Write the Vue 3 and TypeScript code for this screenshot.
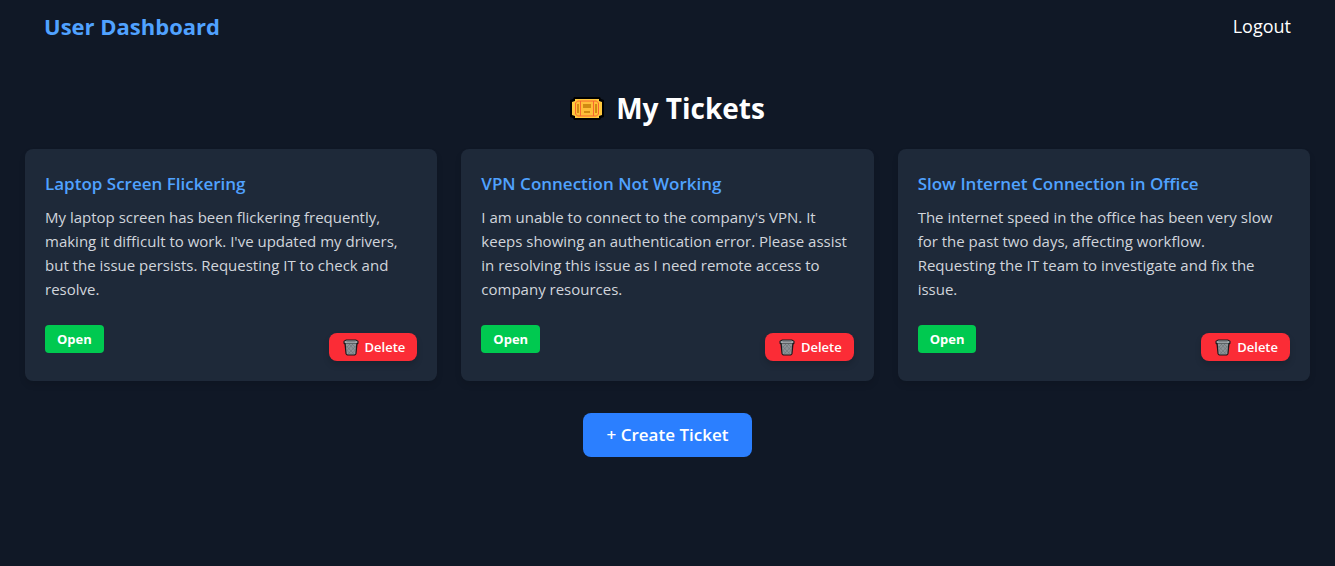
<script setup lang="ts">
interface Ticket {
  id: number
  title: string
  description: string
  status: string
}

const tickets: Ticket[] = [
  {
    id: 1,
    title: 'Laptop Screen Flickering',
    description:
      "My laptop screen has been flickering frequently, making it difficult to work. I've updated my drivers, but the issue persists. Requesting IT to check and resolve.",
    status: 'Open',
  },
  {
    id: 2,
    title: 'VPN Connection Not Working',
    description:
      "I am unable to connect to the company's VPN. It keeps showing an authentication error. Please assist in resolving this issue as I need remote access to company resources.",
    status: 'Open',
  },
  {
    id: 3,
    title: 'Slow Internet Connection in Office',
    description:
      'The internet speed in the office has been very slow for the past two days, affecting workflow. Requesting the IT team to investigate and fix the issue.',
    status: 'Open',
  },
]
</script>

<template>
  <div class="page">
    <header class="navbar">
      <h1 class="brand">User Dashboard</h1>
      <button type="button" class="logout">Logout</button>
    </header>

    <main class="content">
      <h2 class="heading">
        <svg class="ticket-icon" viewBox="0 0 34 23" aria-hidden="true">
          <path d="M4 0H30L31 2L34 3V20L31 21L30 23H4L3 21L0 20V3L3 2Z" fill="#000" />
          <path d="M5 2H29V4L32 5V18L29 19V21H5V19L2 18V5L5 4Z" fill="#ffc83d" />
          <path d="M7.500 4H26.500L28.500 6V17L26.500 19H7.500L5.500 17V6Z" fill="#ffbd38" stroke="#f8672f" />
          <path d="M10.500 4V19M23.500 4V19" stroke="#f8672f" />
          <path d="M13 7H21V11H13ZM14 14H20V16H14ZM7 7H9V16H7ZM25 7H27V16H25Z" fill="#d18a12" />
        </svg>
        <span>My Tickets</span>
      </h2>

      <section class="grid">
        <article v-for="ticket in tickets" :key="ticket.id" class="card">
          <h3 class="title">{{ ticket.title }}</h3>
          <p class="description">{{ ticket.description }}</p>
          <div class="footer">
            <span class="status">{{ ticket.status }}</span>
            <button type="button" class="delete">
              <svg class="trash-icon" viewBox="0 0 16 17" aria-hidden="true">
                <path d="M3 0.500H13L15.500 2V4.500L14.500 5.500L13.500 15L12 16.500H4L2.500 15L1.500 5.500L0.500 4.500V2Z" fill="#17191b" />
                <path d="M2.800 5H13.200L12.400 14.500L11.500 15.500H4.500L3.600 14.500Z" fill="#8d9498" />
                <path d="M3.300 7L11 15M6 5L12 11.500M9 5L12.500 8.500M3.700 11L7.500 15M12.700 7L5 15M10 5L4 11.500M7 5L3.500 8.500M12.300 11L8.500 15" stroke="#6a7175" stroke-width="0.600" />
                <path d="M3.500 1.500H12.500L14.500 2.500V3.500L13 4.500H3L1.500 3.500V2.500Z" fill="#a4abaf" />
                <path d="M4 2.300H12L13 2.800L12 3.300H4L3 2.800Z" fill="#70777b" />
              </svg>
              <span>Delete</span>
            </button>
          </div>
        </article>
      </section>

      <button type="button" class="create">+ Create Ticket</button>
    </main>
  </div>
</template>

<style>
body {
  margin: 0;
  background: #101826;
}
</style>

<style scoped>
.page {
  min-height: 100vh;
  box-sizing: border-box;
  background: #101826;
  color: #fff;
  font-family: 'Segoe UI', 'Open Sans', 'Noto Sans', sans-serif;
}

h1,
h2,
h3,
p {
  margin: 0;
}

button {
  border: 0;
  color: #fff;
  font-family: inherit;
  cursor: pointer;
}

.navbar {
  display: flex;
  justify-content: space-between;
  align-items: center;
  padding: 10px 44px;
}

.brand {
  color: #50a2ff;
  font-size: 22px;
  line-height: 32px;
  font-weight: 700;
}

.logout {
  padding: 0;
  background: transparent;
  font-size: 18px;
  line-height: 28px;
}

.content {
  display: flex;
  flex-direction: column;
  align-items: center;
  padding: 38px 25px 24px;
}

.heading {
  display: flex;
  align-items: center;
  gap: 12px;
  margin-bottom: 23px;
  font-size: 28px;
  line-height: 36px;
  font-weight: 700;
}

.ticket-icon {
  width: 34px;
  height: 23px;
}

.grid {
  display: grid;
  grid-template-columns: repeat(3, minmax(0, 1fr));
  gap: 24px;
  width: 100%;
}

.card {
  padding: 20px;
  border-radius: 8px;
  background: #1e2939;
  box-shadow: 0 4px 6px rgba(0, 0, 0, 0.1);
}

.title {
  margin-bottom: 6px;
  color: #50a2ff;
  font-size: 17px;
  line-height: 30px;
  font-weight: 600;
}

.description {
  padding-right: 4px;
  color: #d1d5dc;
  font-size: 15px;
  line-height: 24px;
}

.footer {
  display: flex;
  justify-content: space-between;
  align-items: flex-start;
  padding-top: 24px;
}

.status {
  padding: 4px 12px;
  border-radius: 4px;
  background: #00c950;
  font-size: 13px;
  line-height: 20px;
  font-weight: 700;
}

.delete {
  display: flex;
  align-items: center;
  gap: 6px;
  margin-top: 8px;
  padding: 4px 12px 4px 14px;
  border-radius: 8px;
  background: #fb2c36;
  font-size: 13px;
  line-height: 20px;
  font-weight: 600;
  box-shadow: 0 4px 6px rgba(0, 0, 0, 0.15);
}

.trash-icon {
  width: 16px;
  height: 17px;
}

.create {
  margin-top: 32px;
  padding: 8px 24px;
  border-radius: 8px;
  background: #2b7fff;
  font-size: 17px;
  line-height: 28px;
  font-weight: 600;
}
</style>
